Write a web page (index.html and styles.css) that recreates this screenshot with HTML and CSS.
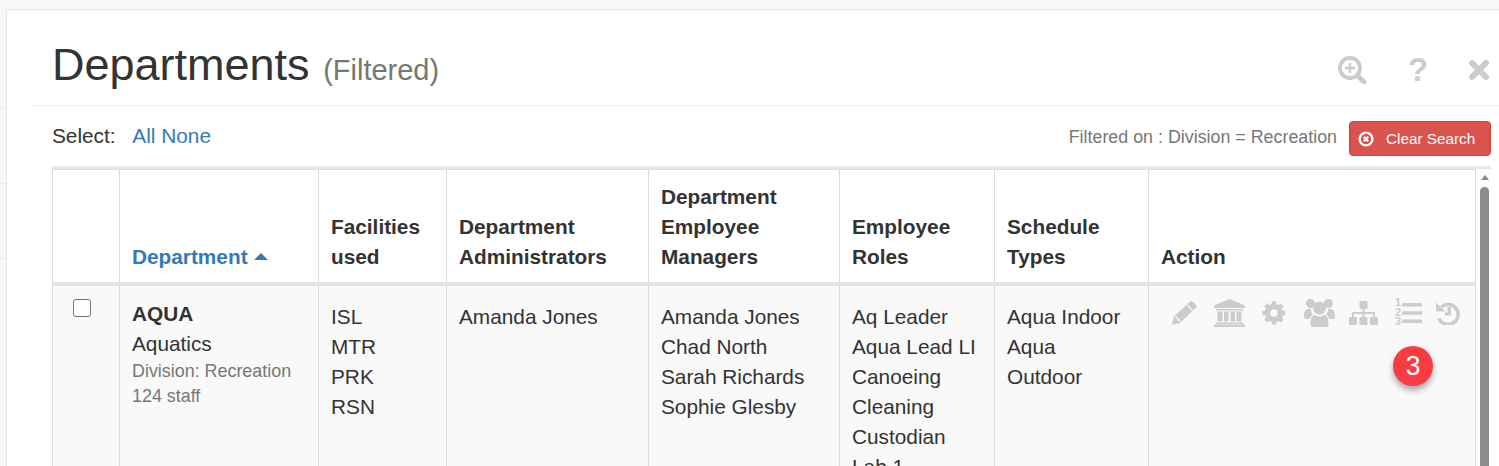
FILE: index.html
```html
<!DOCTYPE html>
<html lang="en">
<head>
    <meta charset="UTF-8">
    <title>Departments</title>
    <link rel="stylesheet" href="styles.css">
</head>
<body>
    <div class="backdrop-lines"><i></i><i></i><i></i></div>
    <div class="modal">
        <div class="modal-header">
            <h1>Departments <small>(Filtered)</small></h1>
            <div class="header-icons">
                <svg width="29" height="28" viewBox="0 0 29 28"><circle cx="12" cy="12" r="10" fill="none" stroke="#ccc" stroke-width="3.8"/><path d="M19.500 19.500 26 26" stroke="#ccc" stroke-width="5" stroke-linecap="round"/><path d="M12 7v10M7 12h10" stroke="#ccc" stroke-width="2.400"/></svg>
                <span class="help">?</span>
                <svg class="close-icon" width="22" height="22" viewBox="0 0 22 22"><path d="M4 4 18 18M18 4 4 18" stroke="#ccc" stroke-width="6" stroke-linecap="round"/></svg>
            </div>
        </div>
        <div class="toolbar">
            <div class="select-links">Select: <a href="#" class="first">All</a> <a href="#">None</a></div>
            <div class="filter-info">
                <span class="filter-text">Filtered on : Division = Recreation</span>
                <button class="btn-clear">
                    <svg width="16" height="16" viewBox="0 0 16 16"><circle cx="8" cy="8" r="6.400" fill="none" stroke="#fff" stroke-width="2.400"/><path d="M5.800 5.800l4.400 4.400M10.200 5.800l-4.400 4.400" stroke="#fff" stroke-width="2.200"/></svg>
                    Clear Search
                </button>
            </div>
        </div>
        <div class="table-wrap">
            <div class="table-scroll">
                <table>
                    <colgroup>
                        <col class="c-check"><col class="c-dept"><col class="c-fac"><col class="c-admin"><col class="c-mgr"><col class="c-role"><col class="c-sched"><col class="c-action">
                    </colgroup>
                    <thead>
                        <tr>
                            <th></th>
                            <th><a href="#">Department</a><span class="caret"></span></th>
                            <th>Facilities used</th>
                            <th>Department Administrators</th>
                            <th>Department Employee Managers</th>
                            <th>Employee Roles</th>
                            <th>Schedule Types</th>
                            <th>Action</th>
                        </tr>
                    </thead>
                    <tbody>
                        <tr>
                            <td class="check-cell"><span class="checkbox"></span></td>
                            <td>
                                <div class="code">AQUA</div>
                                <div>Aquatics</div>
                                <div class="muted">Division: Recreation</div>
                                <div class="muted">124 staff</div>
                            </td>
                            <td>ISL<br>MTR<br>PRK<br>RSN</td>
                            <td>Amanda Jones</td>
                            <td>Amanda Jones<br>Chad North<br>Sarah Richards<br>Sophie Glesby</td>
                            <td>Aq Leader<br>Aqua Lead LI<br>Canoeing<br>Cleaning<br>Custodian<br>Lab 1</td>
                            <td>Aqua Indoor<br>Aqua<br>Outdoor</td>
                            <td>
                                <div class="actions">
                                    <svg class="a-pencil" width="26" height="24" viewBox="0 0 26 24"><path d="M19 .5a2 2 0 0 1 2.500 0l3.500 3.500a2 2 0 0 1 0 2.500L9 22 1 24l1.500-8Z" fill="#ccc"/><path d="M16 4l5.500 5.500M4.500 15.500l5 5" stroke="#f9f9f9" stroke-width="1.200"/></svg>
                                    <svg class="a-bank" width="31" height="28" viewBox="0 0 31 28"><path d="M15.500 0 31 6.500V9H0V6.500Z" fill="#ccc"/><path d="M2 10h27v1.500H2ZM3.500 12.500h5v10h-5ZM10 12.500h4.500v10H10ZM16.500 12.500H21v10h-4.500ZM22.500 12.500h5v10h-5ZM2 23.500h27V25H2ZM0 25.500h31V28H0Z" fill="#ccc"/></svg>
                                    <svg class="a-gear" width="24" height="24" viewBox="0 0 24 24"><circle cx="12" cy="12" r="6.500" fill="none" stroke="#ccc" stroke-width="5.500"/><path d="M12 .5v5M12 18.500v5M.5 12h5M18.500 12h5M3.800 3.800l3.600 3.600M16.600 16.600l3.600 3.600M20.200 3.800l-3.600 3.600M7.400 16.600l-3.600 3.600" stroke="#ccc" stroke-width="4.500"/></svg>
                                    <svg class="a-group" width="31" height="28" viewBox="0 0 31 28"><circle cx="6.500" cy="4.500" r="4.500" fill="#ccc"/><circle cx="24.500" cy="4.500" r="4.500" fill="#ccc"/><circle cx="15.500" cy="9" r="6.500" fill="#ccc"/><path d="M0 17c0-5 1.500-7 5-7h2c-.5 2 .5 4 2 6-2 1-3 2.500-3.500 4H2c-1 0-2-.5-2-3ZM31 17c0-5-1.500-7-5-7h-2c.5 2-.5 4-2 6 2 1 3 2.500 3.500 4H29c1 0 2-.5 2-3ZM9 28c-1.500 0-2.500-1-2.500-2.500 0-6 1.500-9.500 4.500-9.500 3 2 6 2 9 0 3 0 4.500 3.500 4.500 9.500 0 1.500-1 2.500-2.500 2.500Z" fill="#ccc"/></svg>
                                    <svg class="a-map" width="29" height="24" viewBox="0 0 29 24"><path d="M10.500 1a1 1 0 0 1 1-1h6a1 1 0 0 1 1 1v6a1 1 0 0 1-1 1h-6a1 1 0 0 1-1-1ZM0 17a1 1 0 0 1 1-1h6a1 1 0 0 1 1 1v6a1 1 0 0 1-1 1H1a1 1 0 0 1-1-1ZM10.500 17a1 1 0 0 1 1-1h6a1 1 0 0 1 1 1v6a1 1 0 0 1-1 1h-6a1 1 0 0 1-1-1ZM21 17a1 1 0 0 1 1-1h6a1 1 0 0 1 1 1v6a1 1 0 0 1-1 1h-6a1 1 0 0 1-1-1Z" fill="#ccc"/><path d="M14.500 8v8M4 16v-4h21v4" fill="none" stroke="#ccc" stroke-width="2"/></svg>
                                    <div class="a-list">
                                        <span class="nums">1<br>2<br>3</span>
                                        <svg width="20" height="24" viewBox="0 0 20 24"><path d="M0 2h20v3.600H0ZM0 10.200h20v3.600H0ZM0 18.400h20V22H0Z" fill="#ccc"/></svg>
                                    </div>
                                    <svg class="a-history" width="24" height="24" viewBox="0 0 24 24"><path d="M5.500 6A10 10 0 1 1 3 17.500" fill="none" stroke="#ccc" stroke-width="3.600"/><path d="M0 1.500 9.500 10.500H0Z" fill="#ccc"/><path d="M11.500 6H15v8.500H9v-3h2.500Z" fill="#ccc"/></svg>
                                </div>
                                <span class="badge">3</span>
                            </td>
                        </tr>
                    </tbody>
                </table>
            </div>
            <div class="scrollbar"><span class="up"></span><span class="thumb"></span></div>
        </div>
    </div>
</body>
</html>
```
FILE: styles.css
```css
html, body {
    height: 466px;
    overflow: hidden;
}
body {
    margin: 0;
    padding: 9px 0 0 6px;
    box-sizing: border-box;
    background-color: #f7f7f7;
    font-family: "Liberation Sans", Arial, sans-serif;
    font-size: 20.8px;
    line-height: 30px;
    color: #333;
    position: relative;
}
.backdrop-lines i {
    position: absolute;
    left: 0;
    width: 6px;
    height: 1px;
    background: #e8e8e8;
}
.backdrop-lines i:nth-child(1) { top: 108px; }
.backdrop-lines i:nth-child(2) { top: 183px; }
.backdrop-lines i:nth-child(3) { top: 258px; }
a {
    color: #337ab7;
    text-decoration: none;
}
.modal {
    width: 1520px;
    height: 457px;
    overflow: hidden;
    background: #fff;
    border: 1px solid #e7e7e7;
    border-bottom: 0;
    box-sizing: border-box;
}
.modal-header {
    display: flex;
    justify-content: space-between;
    margin-left: 23px;
    height: 95px;
    border-bottom: 1px solid #eee;
}
h1 {
    margin: 26px 0 0 22px;
    font-size: 45px;
    font-weight: 400;
    line-height: 58px;
}
h1 small {
    font-size: 29px;
    color: #777;
    margin-left: 1px;
}
.header-icons {
    display: flex;
    align-items: center;
    width: 187px;
    height: 30px;
    margin-top: 45px;
}
.help {
    font-size: 33px;
    font-weight: 700;
    color: #ccc;
    margin-left: 41px;
    line-height: 30px;
}
.close-icon {
    margin-left: 40px;
}
.toolbar {
    display: flex;
    justify-content: space-between;
    align-items: center;
    height: 60px;
    margin-left: 45px;
    width: 1439px;
}
.select-links a.first {
    margin-left: 11px;
}
.filter-info {
    display: flex;
    align-items: center;
    font-size: 17.85px;
    color: #777;
}
.filter-text {
    margin-top: 2px;
}
.btn-clear {
    display: flex;
    align-items: center;
    gap: 12px;
    margin: 4px 0 0 12px;
    width: 142px;
    height: 35px;
    padding: 2px 0 0 8px;
    background: #d9534f;
    border: 1px solid #d43f3a;
    border-radius: 4px;
    color: #fff;
    font-family: inherit;
    font-size: 15.3px;
}
.table-wrap {
    display: flex;
    margin-left: 45px;
    width: 1439px;
    border-top: 3px solid #e8e8e8;
}
.table-scroll {
    width: 1424px;
}
table {
    table-layout: fixed;
    border-collapse: collapse;
    width: 1424px;
}
.c-check { width: 67px; }
.c-dept { width: 199px; }
.c-fac { width: 128px; }
.c-admin { width: 202px; }
.c-mgr { width: 191px; }
.c-role { width: 155px; }
.c-sched { width: 154px; }
th, td {
    border: 1px solid #ddd;
    padding: 0 12px;
    text-align: left;
    vertical-align: top;
}
th {
    height: 114px;
    padding-bottom: 10px;
    vertical-align: bottom;
    font-weight: 700;
    border-bottom: 4px solid #e3e3e3;
    box-sizing: border-box;
}
tbody tr {
    background: #f9f9f9;
}
tbody td {
    height: 200px;
    padding-top: 16px;
}
.caret {
    display: inline-block;
    margin-left: 6px;
    vertical-align: 4px;
    border-left: 7px solid transparent;
    border-right: 7px solid transparent;
    border-bottom: 7px solid #337ab7;
}
tbody .check-cell {
    padding: 13px 0 0 20px;
}
.checkbox {
    display: block;
    width: 16px;
    height: 16px;
    border: 1px solid #767676;
    border-radius: 3px;
    background: #fff;
}
.code {
    font-weight: 700;
    margin-top: -3px;
}
.muted {
    font-size: 17.9px;
    line-height: 25px;
    color: #777;
}
.actions {
    display: flex;
    align-items: center;
    margin: -3px 0 0 10px;
    height: 28px;
}
.a-bank { margin-left: 17px; }
.a-gear { margin-left: 17px; }
.a-group { margin-left: 18px; }
.a-map { margin-left: 14px; }
.a-history { margin-left: 13px; }
.a-list {
    display: flex;
    align-items: center;
    gap: 1px;
    margin-left: 17px;
    width: 28px;
}
.nums {
    font-size: 11px;
    line-height: 9.5px;
    font-weight: 700;
    color: #ccc;
}
td:last-child {
    position: relative;
}
.badge {
    position: absolute;
    left: 244px;
    top: 60px;
    width: 40px;
    height: 40px;
    border-radius: 50%;
    background: #f93c42;
    color: #fff;
    font-size: 27px;
    line-height: 40px;
    text-align: center;
    box-shadow: 0 4px 6px rgba(0,0,0,0.35);
}
.scrollbar {
    width: 12px;
    margin-left: 3px;
    height: 300px;
    position: relative;
}
.scrollbar .up {
    display: block;
    width: 0;
    margin: 6px auto 0;
    border-left: 4.5px solid transparent;
    border-right: 4.5px solid transparent;
    border-bottom: 5px solid #8c8c8c;
}
.scrollbar .thumb {
    position: absolute;
    top: 18px;
    left: 1px;
    width: 9px;
    height: 285px;
    border-radius: 5px 5px 0 0;
    background: #8c8c8c;
}
```
